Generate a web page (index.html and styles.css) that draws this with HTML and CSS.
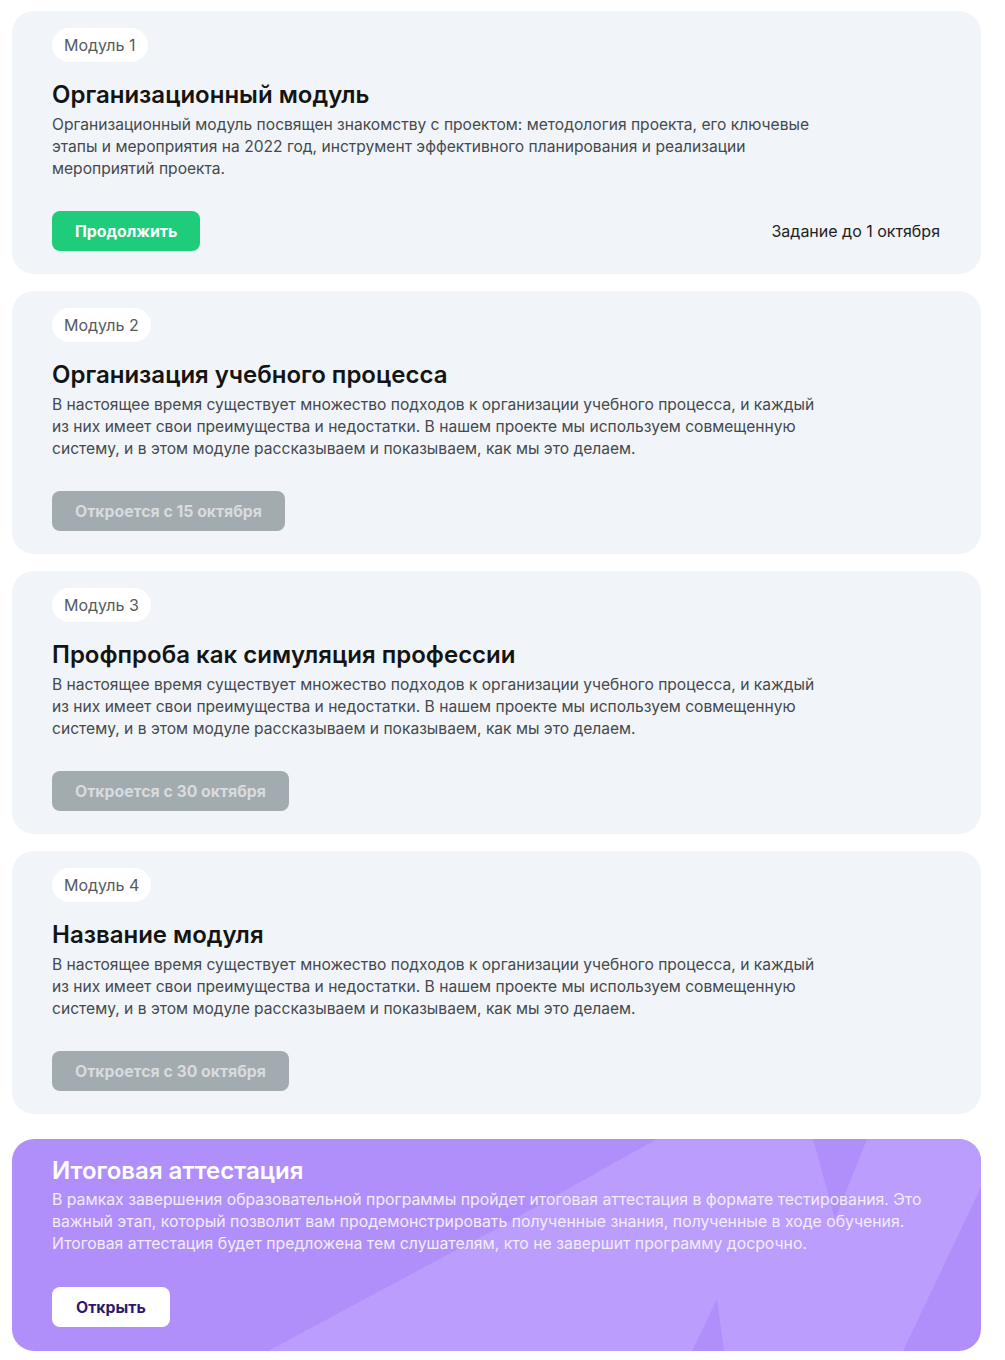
FILE: index.html
```html
<!DOCTYPE html>
<html lang="ru">
<head>
<meta charset="utf-8">
<link rel="stylesheet" href="styles.css">
</head>
<body>
<div class="list">
  <section class="card">
    <span class="pill">Модуль 1</span>
    <h2 class="title">Организационный модуль</h2>
    <p class="desc">Организационный модуль посвящен знакомству с проектом: методология проекта, его ключевые<br>этапы и мероприятия на 2022 год, инструмент эффективного планирования и реализации<br>мероприятий проекта.</p>
    <div class="actions">
      <button class="btn btn-green">Продолжить</button>
      <span class="due">Задание до 1 октября</span>
    </div>
  </section>
  <section class="card">
    <span class="pill">Модуль 2</span>
    <h2 class="title">Организация учебного процесса</h2>
    <p class="desc">В настоящее время существует множество подходов к организации учебного процесса, и каждый<br>из них имеет свои преимущества и недостатки. В нашем проекте мы используем совмещенную<br>систему, и в этом модуле рассказываем и показываем, как мы это делаем.</p>
    <div class="actions">
      <button class="btn btn-grey">Откроется с 15 октября</button>
    </div>
  </section>
  <section class="card">
    <span class="pill">Модуль 3</span>
    <h2 class="title">Профпроба как симуляция профессии</h2>
    <p class="desc">В настоящее время существует множество подходов к организации учебного процесса, и каждый<br>из них имеет свои преимущества и недостатки. В нашем проекте мы используем совмещенную<br>систему, и в этом модуле рассказываем и показываем, как мы это делаем.</p>
    <div class="actions">
      <button class="btn btn-grey">Откроется с 30 октября</button>
    </div>
  </section>
  <section class="card">
    <span class="pill">Модуль 4</span>
    <h2 class="title">Название модуля</h2>
    <p class="desc">В настоящее время существует множество подходов к организации учебного процесса, и каждый<br>из них имеет свои преимущества и недостатки. В нашем проекте мы используем совмещенную<br>систему, и в этом модуле рассказываем и показываем, как мы это делаем.</p>
    <div class="actions">
      <button class="btn btn-grey">Откроется с 30 октября</button>
    </div>
  </section>
  <section class="final">
    <svg class="final-bg" viewBox="0 0 969 212" preserveAspectRatio="none" aria-hidden="true">
      <polygon points="256,212 420,124 488,88 645,0 801,0 823,80 855,0 969,0 969,48 891,212" fill="#bb9dfd"/>
      <polygon points="680,212 705,160 712,212" fill="#b18ffb"/>
    </svg>
    <div class="final-body">
      <h2 class="final-title">Итоговая аттестация</h2>
      <p class="final-desc">В рамках завершения образовательной программы пройдет итоговая аттестация в формате тестирования. Это<br>важный этап, который позволит вам продемонстрировать полученные знания, полученные в ходе обучения.<br>Итоговая аттестация будет предложена тем слушателям, кто не завершит программу досрочно.</p>
      <button class="btn btn-white">Открыть</button>
    </div>
  </section>
</div>
</body>
</html>
```
FILE: styles.css
```css
* { box-sizing: border-box; }
html, body { margin: 0; background: #ffffff; }
body {
  font-family: Inter, "Noto Sans", "DejaVu Sans", sans-serif;
  padding: 11px 24px 0 12px;
  color: #222;
}
.list {
  display: flex;
  flex-direction: column;
  gap: 17px;
}
.card {
  background: #f1f5f9;
  border-radius: 22px;
  padding: 17px 41px 23px 40px;
  display: flex;
  flex-direction: column;
  align-items: flex-start;
}
.pill {
  display: inline-flex;
  align-items: center;
  height: 34px;
  padding: 0 12px;
  background: #ffffff;
  border-radius: 17px;
  font-size: 16px;
  color: #555a60;
}
.title {
  margin: 17px 0 0;
  font-size: 24px;
  line-height: 32px;
  font-weight: 600;
  color: #141414;
}
.desc {
  margin: 3px 0 0;
  font-size: 15.6px;
  line-height: 22px;
  color: #45494e;
  white-space: nowrap;
}
.actions {
  margin-top: 31px;
  display: flex;
  align-items: center;
  justify-content: space-between;
  align-self: stretch;
}
.btn {
  height: 40px;
  border: 0;
  border-radius: 8px;
  padding: 0 23px;
  font-family: inherit;
  font-size: 15.8px;
  font-weight: 700;
}
.btn-green { background: #1fcc79; color: #ffffff; }
.btn-grey { background: #a2abb0; color: #d8dcdf; }
.btn-white { background: #ffffff; color: #2c1a6e; }
.due { font-size: 16px; color: #222; }
.final {
  position: relative;
  margin-top: 8px;
  background: #b18ffb;
  border-radius: 22px;
  overflow: hidden;
  height: 212px;
}
.final-bg {
  position: absolute;
  inset: 0;
  width: 100%;
  height: 100%;
}
.final-body {
  position: relative;
  padding: 16px 40px 24px;
  display: flex;
  flex-direction: column;
  align-items: flex-start;
}
.final-title {
  margin: 0;
  font-size: 24px;
  line-height: 32px;
  font-weight: 600;
  color: #ffffff;
}
.final-desc {
  margin: 2px 0 0;
  font-size: 15.8px;
  line-height: 22px;
  color: #f3ecff;
  white-space: nowrap;
}
.final .btn-white { margin-top: 32px; padding: 0 24px; }
```
